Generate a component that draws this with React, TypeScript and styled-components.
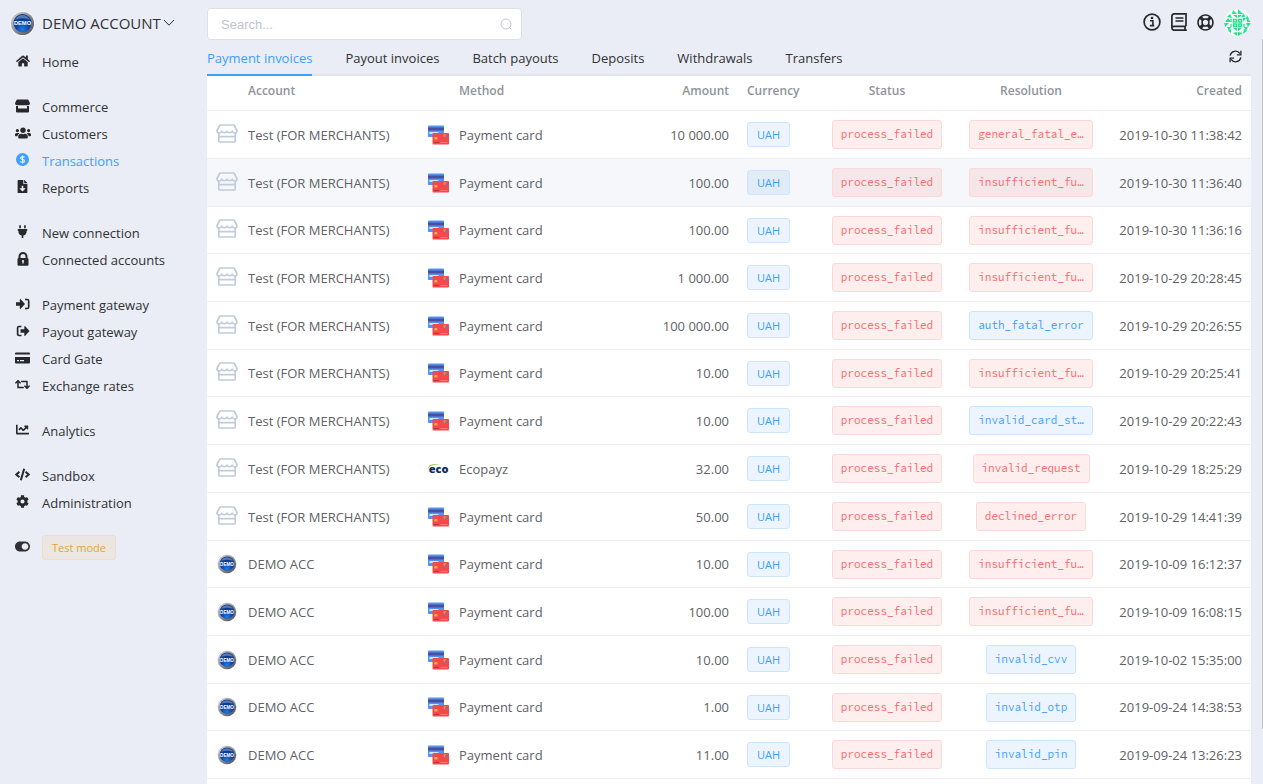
import React from "react";
import styled, { createGlobalStyle, css } from "styled-components";
import {
  FaHome,
  FaUsers,
  FaFileDownload,
  FaPlug,
  FaRetweet,
  FaChartLine,
  FaCode,
  FaCog,
  FaToggleOn,
  FaRegLifeRing,
} from "react-icons/fa";

const GlobalStyle = createGlobalStyle`
  *, *::before, *::after { box-sizing: border-box; }
  body {
    margin: 0;
    background: #eaedf5;
    color: #303133;
    font-family: "Open Sans", "Noto Sans", sans-serif;
    font-size: 13px;
    line-height: 18px;
  }
`;

const Page = styled.div`
  display: flex;
  height: 100vh;
  overflow: hidden;
`;

/* ---------- sidebar ---------- */

const Sidebar = styled.aside`
  flex: 0 0 207px;
  padding: 8px 0 0 10px;
`;

const AccountButton = styled.button`
  display: flex;
  align-items: center;
  height: 30px;
  padding: 0;
  border: 0;
  background: none;
  color: inherit;
  font: inherit;
  font-size: 15px;
  cursor: pointer;

  span { margin: 0 2px 0 7px; }
`;

const NavGroup = styled.ul`
  margin: 0 0 18px;
  padding: 0;
  list-style: none;
`;

const Nav = styled.nav`
  padding-top: 10px;
`;

const NavLink = styled.a<{ $active?: boolean }>`
  display: flex;
  align-items: center;
  height: 27px;
  color: ${(p) => (p.$active ? "#409eff" : "#303133")};
  text-decoration: none;

  svg { color: ${(p) => (p.$active ? "#409eff" : "#26282b")}; }
`;

const NavIcon = styled.span`
  display: flex;
  justify-content: center;
  width: 25px;
  margin-right: 7px;
  padding-bottom: 2px;
`;

const ModeRow = styled.div`
  display: flex;
  align-items: center;
  height: 27px;
`;

const ModeButton = styled.button`
  height: 25px;
  padding: 0 9px;
  border: 1px solid #f0dfc6;
  border-radius: 3px;
  background: #ebe6e2;
  color: #e6a23c;
  font: inherit;
  font-size: 11px;
`;

/* ---------- main ---------- */

const Main = styled.main`
  display: flex;
  flex: 1;
  flex-direction: column;
  min-width: 0;
  padding-right: 12px;
`;

const TopBar = styled.header`
  display: flex;
  align-items: flex-start;
  justify-content: space-between;
  height: 42px;
  padding-top: 8px;
`;

const SearchBox = styled.label`
  display: flex;
  align-items: center;
  width: 315px;
  height: 32px;
  padding: 0 9px 0 13px;
  border: 1px solid #dcdfe6;
  border-radius: 4px;
  background: #fff;
  color: #c0c4cc;
`;

const SearchInput = styled.input`
  flex: 1;
  min-width: 0;
  padding: 0;
  border: 0;
  outline: 0;
  background: none;
  color: #606266;
  font: 13px "Liberation Sans", Arial, sans-serif;

  &::placeholder { color: #c0c4cc; }
`;

const Tools = styled.div`
  display: flex;
  align-items: center;
  gap: 10px;
  height: 28px;
`;

const ToolButton = styled.button`
  display: flex;
  padding: 0;
  border: 0;
  background: none;
  color: #26282b;
  cursor: pointer;
`;

const TabBar = styled.div`
  display: flex;
  flex: none;
  align-items: stretch;
  gap: 33px;
  height: 34px;
  border-bottom: 2px solid #e1e5ee;
`;

const Tab = styled.a<{ $active?: boolean }>`
  height: 34px;
  padding-top: 7px;
  border-bottom: 2px solid ${(p) => (p.$active ? "#409eff" : "transparent")};
  color: ${(p) => (p.$active ? "#409eff" : "#303133")};
  text-decoration: none;
  white-space: nowrap;
`;

const Refresh = styled(ToolButton)`
  align-items: center;
  margin: 0 9px 4px auto;
`;

const Sheet = styled.section`
  flex: 1;
  min-height: 0;
  overflow: hidden;
  background: #fff;
`;

const Table = styled.table`
  width: 100%;
  border-spacing: 0;
  table-layout: fixed;
  color: #606266;
`;

type Align = "left" | "right" | "center";

const cell = css<{ $align?: Align }>`
  padding: 0 9px;
  border-bottom: 1px solid #ebeef5;
  text-align: ${(p) => p.$align || "left"};
  white-space: nowrap;
`;

const HeadCell = styled.th<{ $align?: Align }>`
  ${cell}
  height: 35px;
  padding-bottom: 4px;
  color: #909399;
  font-size: 12px;
  font-weight: 600;
`;

const Cell = styled.td<{ $align?: Align }>`
  ${cell}
`;

const IconCell = styled(Cell)`
  padding: 0 0 0 8px;

  svg { display: block; margin: 0 auto; }
`;

const Row = styled.tr<{ $hover?: boolean }>`
  height: 48px;
  background: ${(p) => (p.$hover ? "#f5f7fa" : "#fff")};

  &:nth-child(7n + 3),
  &:nth-child(7n + 6) { height: 47px; }
`;

type Tone = "blue" | "red";

const Tag = styled.span<{ $tone: Tone; $hover?: boolean }>`
  display: inline-block;
  height: 25px;
  padding: 0 9px;
  border: 1px solid ${(p) => (p.$tone === "blue" ? "#cbe5ff" : "#fcd8d8")};
  border-radius: 3px;
  background: ${(p) =>
    p.$tone === "blue" ? (p.$hover ? "#e0ecf8" : "#ecf5ff") : p.$hover ? "#f4e6e9" : "#feeeee"};
  color: ${(p) => (p.$tone === "blue" ? "#409eff" : "#f56c6c")};
  font-size: 11px;
  line-height: 23px;
  vertical-align: middle;
`;

const CodeTag = styled(Tag)`
  height: 29px;
  padding: 0 8px;
  font-family: "Source Code Pro", "Liberation Mono", monospace;
  line-height: 27px;
`;

const ScrollThumb = styled.div`
  position: fixed;
  top: 39px;
  right: 0;
  width: 1px;
  height: 88vh;
  background: #c3c5ca;
`;

/* ---------- drawings ---------- */

const DemoBadge = ({ size }: { size: number }) => (
  <svg width={size} height={size} viewBox="0 0 26 26" aria-hidden="true">
    <defs>
      <linearGradient id="rim" x1="0" y1="0" x2="1" y2="1">
        <stop offset="0" stopColor="#dcdcdc" />
        <stop offset="0.5" stopColor="#8b8d92" />
        <stop offset="1" stopColor="#4a4b50" />
      </linearGradient>
      <radialGradient id="face" cx="0.5" cy="0.85" r="0.8">
        <stop offset="0" stopColor="#1f7be0" />
        <stop offset="0.5" stopColor="#0c3fa4" />
        <stop offset="1" stopColor="#14397e" />
      </radialGradient>
    </defs>
    <circle cx="13" cy="13" r="13" fill="#f4f5f7" />
    <circle cx="13" cy="13" r="12" fill="url(#rim)" />
    <circle cx="13" cy="12.600" r="9.400" fill="url(#face)" />
    <path d="M5.500 9a8.200 8.200 0 0 1 15 0q-7.500 -3 -15 0z" fill="#7fa3da" opacity="0.6" />
    <text x="13" y="15" fontSize="6" fontWeight="700" textAnchor="middle" fill="#fff" fontFamily="Liberation Sans, sans-serif">
      DEMO
    </text>
  </svg>
);

const StoreIcon = () => (
  <svg width="22" height="22" viewBox="0 0 22 22" fill="none" stroke="#c0ccda" strokeWidth="1.700" strokeLinejoin="round">
    <path d="M4 1h14l3 5.500c0 1.800-1 2.500-2.100 2.500-1.300 0-2.200-.8-2.600-1.800-.4 1-1.300 1.500-2.600 1.500S11.400 8.200 11 7.200c-.4 1-1.400 1.500-2.700 1.500S6.100 8.200 5.700 7.200C5.300 8.200 4.400 9 3.100 9 2 9 1 8.300 1 6.500z" />
    <path d="M2.800 9v8.200c0 .5.300.8.800.8h14.800c.5 0 .8-.3.800-.8V9M2.800 12.600h16.400" />
  </svg>
);

const CardsIcon = () => (
  <svg width="22" height="20" viewBox="-1 0 22 20">
    <rect x="0" y="0.500" width="16" height="11.500" rx="0.800" fill="#4f95f5" />
    <rect x="0" y="2.500" width="16" height="3" fill="#4b4f9b" />
    <rect x="1.500" y="7" width="9" height="2" fill="#d5e5fb" />
    <rect x="4.500" y="8" width="16.500" height="11.500" rx="1" fill="#f5484c" />
    <rect x="6.300" y="12" width="3.200" height="2.600" rx="0.800" fill="#e8b23b" />
    <path d="M6 17.500h5" stroke="#c22f3b" strokeWidth="1" />
    <path d="M12.500 17.500h7" stroke="#ff7474" strokeWidth="1" />
    <circle cx="17" cy="10.500" r="1.500" fill="#e58f4d" />
    <circle cx="18.500" cy="11.500" r="1.500" fill="#9c6b86" />
  </svg>
);

const EcoIcon = () => (
  <svg width="22" height="20" viewBox="-1 0 22 20">
    <path d="M.3 11Q-.7 5.500 5.500 5.200q4-.3 7 .6-9-.4-11 2Q.3 9 .3 11z" fill="#8cc63f" />
    <text x="0.800" y="14" fontSize="11" fontWeight="800" fill="#0d2d5e" fontFamily="Open Sans, sans-serif">
      eco
    </text>
  </svg>
);

const ShopFill = () => (
  <svg width="15" height="14" viewBox="0 0 15 14" fill="currentColor">
    <path d="M2.500.5h10q.8 0 1.100.7L15 4.300Q15 6.300 13 6.300H2Q0 6.300 0 4.300l1.400-3.100Q1.700.5 2.500.5z" />
    <path d="M1 7h2v2.500h9V7h2v5.500q0 1-1 1H2q-1 0-1-1z" />
  </svg>
);

const DollarDisc = () => (
  <svg width="13" height="13" viewBox="0 0 13 13">
    <circle cx="6.500" cy="6.500" r="6.500" fill="currentColor" />
    <path d="M8.500 4.600Q8 3.600 6.500 3.600T4.600 4.900q0 1.100 1.900 1.500t2 1.600q0 1.400-2 1.400T4.400 8.300M6.500 2.400v8.200" fill="none" stroke="#eaedf5" strokeWidth="1.200" />
  </svg>
);

const LockFill = () => (
  <svg width="12" height="14" viewBox="0 0 12 14" fill="currentColor">
    <path fillRule="evenodd" d="M1.500 6V4.500a4.500 4.500 0 0 1 9 0V6q1 .2 1 1.200v5.300q0 1.200-1.200 1.200H1.700q-1.200 0-1.200-1.200V7.200Q.5 6.200 1.500 6zm2 0h5V4.500a2.500 2.500 0 0 0-5 0zM6 8a1 1 0 0 0-.7 1.800v1.800h1.400V9.800A1 1 0 0 0 6 8z" />
  </svg>
);

const EnterIcon = () => (
  <svg width="14" height="12" viewBox="0 0 14 12">
    <path d="M0 4.200h3.800V1.500q.2-.7.900-.2L9 6 4.700 10.700q-.7.500-.9-.2V7.800H0z" fill="currentColor" />
    <path d="M9 1.500h2.300q1.400 0 1.400 1.400v6.200q0 1.400-1.400 1.400H9" fill="none" stroke="currentColor" strokeWidth="1.700" />
  </svg>
);

const ExitIcon = () => (
  <svg width="14" height="12" viewBox="0 0 14 12">
    <path d="M4.500 4.200h3.800V1.500q.2-.7.900-.2L13.500 6 9.200 10.700q-.7.500-.9-.2V7.800H4.500z" fill="currentColor" />
    <path d="M5.500 1.500H3Q1.600 1.500 1.600 2.900v6.200q0 1.400 1.400 1.400h2.500" fill="none" stroke="currentColor" strokeWidth="1.700" />
  </svg>
);

const CardFill = () => (
  <svg width="15" height="12" viewBox="0 0 15 12" fill="currentColor">
    <path d="M1 .5h13q1 0 1 1V2.500H0V1.500q0-1 1-1z" />
    <path fillRule="evenodd" d="M0 5h15v5.500q0 1-1 1H1q-1 0-1-1zm2 3v1.300h2V8zm3 0v1.300h4V8z" />
  </svg>
);

const ChevronDown = () => (
  <svg width="12" height="8" viewBox="0 0 12 8" fill="none" stroke="currentColor">
    <path d="M1 1l5 5.200L11 1" />
  </svg>
);

const SearchIcon = () => (
  <svg width="12" height="12" viewBox="0 0 12 12" fill="none" stroke="currentColor">
    <circle cx="6" cy="6" r="5" />
    <path d="M9.500 9.500l1.500 1.500" />
  </svg>
);

const InfoIcon = () => (
  <svg width="18" height="18" viewBox="0 0 18 18">
    <circle cx="9" cy="9" r="7.900" fill="none" stroke="currentColor" strokeWidth="1.700" />
    <path d="M7 7.700h2.900v4.600M6.900 12.600h4.300" fill="none" stroke="currentColor" strokeWidth="1.600" />
    <circle cx="9" cy="5" r="1.300" fill="currentColor" />
  </svg>
);

const BookIcon = () => (
  <svg width="16" height="18" viewBox="0 0 16 18" fill="none" stroke="currentColor" strokeWidth="1.700">
    <path d="M15 13.300V.9H3.200Q.9.900.9 3.300v11.500q0 2.400 2.300 2.400h12.600M15 13.300H3.200q-2.300 0-2.300 1.900M14 13.300v3.900" />
    <path d="M4.500 5h8M4.500 8h8" strokeWidth="1.500" />
  </svg>
);

const RefreshIcon = () => (
  <svg width="13" height="13" viewBox="0 0 14 14" fill="none" stroke="currentColor" strokeWidth="1.400">
    <path d="M1.200 6A5.900 5.900 0 0 1 11.800 3.800M12.800 8A5.900 5.900 0 0 1 2.200 10.200" />
    <path d="M12.800.8v4.400H8.500M1.200 13.200V8.800h4.300" />
  </svg>
);

/* identicon: triangles mirrored round a centre of four rings */
const AVATAR_LEAVES =
  "M9 1l4 4H8zM14 0l5 5h-5zM6 5l2 4-5-1zM20 4l1 4h-4zM9 6h4v3zM14 6h4l-4 3zM23 6l2 4h-3zM4 9l3 4H1zM19 9h3l-3 4zM23 9l4 4h-4zM0 14h5l-4 4zM22 14h5l-3 4zM3 18h4l-2 4zM20 18h4l-2 4zM9 19h4v3zM14 19h4l-4 3zM7 20v4l-3-2zM20 20l3 2-4 3zM9 24l4-1v4zM14 23l5 1-5 3z";

const AvatarIcon = () => (
  <svg width="27" height="27" viewBox="0 0 27 27">
    <defs>
      <clipPath id="avatarClip">
        <circle cx="13.500" cy="13.500" r="13.500" />
      </clipPath>
    </defs>
    <g clipPath="url(#avatarClip)">
      <rect width="27" height="27" fill="#f6fbfb" />
      <path d={AVATAR_LEAVES} fill="#1ee58a" />
      <path
        d="M9.500 10.500h3v2.500h-3zM14.500 10.500h3v2.500h-3zM9.500 15h3v2.500h-3zM14.500 15h3v2.500h-3zM7 10v3M7 15v3M20 15v3"
        fill="none"
        stroke="#1ee58a"
        strokeWidth="1.300"
      />
    </g>
  </svg>
);

/* ---------- data ---------- */

type NavEntry = { label: string; icon: React.ReactNode; active?: boolean };

const NAV: NavEntry[][] = [
  [{ label: "Home", icon: <FaHome size={14} /> }],
  [
    { label: "Commerce", icon: <ShopFill /> },
    { label: "Customers", icon: <FaUsers size={16} /> },
    { label: "Transactions", icon: <DollarDisc />, active: true },
    { label: "Reports", icon: <FaFileDownload size={13} /> },
  ],
  [
    { label: "New connection", icon: <FaPlug size={13} /> },
    { label: "Connected accounts", icon: <LockFill /> },
  ],
  [
    { label: "Payment gateway", icon: <EnterIcon /> },
    { label: "Payout gateway", icon: <ExitIcon /> },
    { label: "Card Gate", icon: <CardFill /> },
    { label: "Exchange rates", icon: <FaRetweet size={15} /> },
  ],
  [{ label: "Analytics", icon: <FaChartLine size={13} /> }],
  [
    { label: "Sandbox", icon: <FaCode size={15} /> },
    { label: "Administration", icon: <FaCog size={13} /> },
  ],
];

const TABS = ["Payment invoices", "Payout invoices", "Batch payouts", "Deposits", "Withdrawals", "Transfers"];

type Invoice = [account: "test" | "demo", method: string, amount: string, resolution: string, tone: Tone, created: string];

const INVOICES: Invoice[] = [
  ["test", "Payment card", "10 000.00", "general_fatal_e…", "red", "2019-10-30 11:38:42"],
  ["test", "Payment card", "100.00", "insufficient_fu…", "red", "2019-10-30 11:36:40"],
  ["test", "Payment card", "100.00", "insufficient_fu…", "red", "2019-10-30 11:36:16"],
  ["test", "Payment card", "1 000.00", "insufficient_fu…", "red", "2019-10-29 20:28:45"],
  ["test", "Payment card", "100 000.00", "auth_fatal_error", "blue", "2019-10-29 20:26:55"],
  ["test", "Payment card", "10.00", "insufficient_fu…", "red", "2019-10-29 20:25:41"],
  ["test", "Payment card", "10.00", "invalid_card_st…", "blue", "2019-10-29 20:22:43"],
  ["test", "Ecopayz", "32.00", "invalid_request", "red", "2019-10-29 18:25:29"],
  ["test", "Payment card", "50.00", "declined_error", "red", "2019-10-29 14:41:39"],
  ["demo", "Payment card", "10.00", "insufficient_fu…", "red", "2019-10-09 16:12:37"],
  ["demo", "Payment card", "100.00", "insufficient_fu…", "red", "2019-10-09 16:08:15"],
  ["demo", "Payment card", "10.00", "invalid_cvv", "blue", "2019-10-02 15:35:00"],
  ["demo", "Payment card", "1.00", "invalid_otp", "blue", "2019-09-24 14:38:53"],
  ["demo", "Payment card", "11.00", "invalid_pin", "blue", "2019-09-24 13:26:23"],
];

const COLUMN_WIDTHS = [32, 179, 32, undefined, 144, 77, 144, 144, 148];
const HOVERED = 1;

export default function App() {
  return (
    <>
      <GlobalStyle />
      <Page>
        <Sidebar>
          <AccountButton type="button">
            <DemoBadge size={25} />
            <span>DEMO ACCOUNT</span>
            <ChevronDown />
          </AccountButton>
          <Nav>
            {NAV.map((group, i) => (
              <NavGroup key={i}>
                {group.map((item) => (
                  <li key={item.label}>
                    <NavLink href="#" $active={item.active}>
                      <NavIcon>{item.icon}</NavIcon>
                      {item.label}
                    </NavLink>
                  </li>
                ))}
              </NavGroup>
            ))}
          </Nav>
          <ModeRow>
            <NavIcon>
              <FaToggleOn size={15} />
            </NavIcon>
            <ModeButton type="button">Test mode</ModeButton>
          </ModeRow>
        </Sidebar>

        <Main>
          <TopBar>
            <SearchBox>
              <SearchInput type="text" placeholder="Search..." aria-label="Search" />
              <SearchIcon />
            </SearchBox>
            <Tools>
              <ToolButton type="button" aria-label="Information"><InfoIcon /></ToolButton>
              <ToolButton type="button" aria-label="Documentation"><BookIcon /></ToolButton>
              <ToolButton type="button" aria-label="Support"><FaRegLifeRing size={17} /></ToolButton>
              <ToolButton type="button" aria-label="Profile"><AvatarIcon /></ToolButton>
            </Tools>
          </TopBar>

          <TabBar>
            {TABS.map((label, i) => (
              <Tab key={label} href="#" $active={i === 0}>{label}</Tab>
            ))}
            <Refresh type="button" aria-label="Refresh"><RefreshIcon /></Refresh>
          </TabBar>

          <Sheet>
            <Table>
              <colgroup>
                {COLUMN_WIDTHS.map((width, i) => (
                  <col key={i} width={width} />
                ))}
              </colgroup>
              <thead>
                <tr>
                  <HeadCell />
                  <HeadCell>Account</HeadCell>
                  <HeadCell />
                  <HeadCell>Method</HeadCell>
                  <HeadCell $align="right">Amount</HeadCell>
                  <HeadCell>Currency</HeadCell>
                  <HeadCell $align="center">Status</HeadCell>
                  <HeadCell $align="center">Resolution</HeadCell>
                  <HeadCell $align="right">Created</HeadCell>
                </tr>
              </thead>
              <tbody>
                {INVOICES.map(([account, method, amount, resolution, tone, created], i) => {
                  const hover = i === HOVERED;
                  return (
                    <Row key={created} $hover={hover}>
                      <IconCell>{account === "test" ? <StoreIcon /> : <DemoBadge size={20} />}</IconCell>
                      <Cell>{account === "test" ? "Test (FOR MERCHANTS)" : "DEMO ACC"}</Cell>
                      <IconCell>{method === "Ecopayz" ? <EcoIcon /> : <CardsIcon />}</IconCell>
                      <Cell>{method}</Cell>
                      <Cell $align="right">{amount}</Cell>
                      <Cell><Tag $tone="blue" $hover={hover}>UAH</Tag></Cell>
                      <Cell $align="center"><CodeTag $tone="red" $hover={hover}>process_failed</CodeTag></Cell>
                      <Cell $align="center"><CodeTag $tone={tone} $hover={hover}>{resolution}</CodeTag></Cell>
                      <Cell $align="right">{created}</Cell>
                    </Row>
                  );
                })}
              </tbody>
            </Table>
          </Sheet>
        </Main>
        <ScrollThumb />
      </Page>
    </>
  );
}
